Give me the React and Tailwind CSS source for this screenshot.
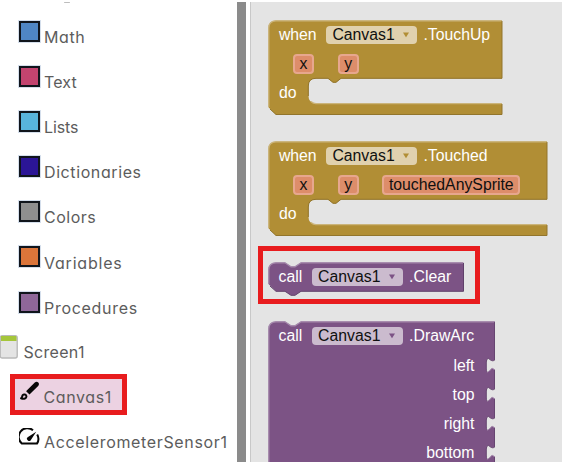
import React from "react";

const categories = [
  { name: "Math", color: "bg-[#4f86c4]", tracking: "tracking-[0.6px]" },
  { name: "Text", color: "bg-[#c3446f]", tracking: "tracking-[0.1px]" },
  { name: "Lists", color: "bg-[#58b4dc]", tracking: "tracking-[-0.1px]" },
  { name: "Dictionaries", color: "bg-[#2b1596]", tracking: "tracking-[0.6px]" },
  { name: "Colors", color: "bg-[#8f8f8f]", tracking: "tracking-[0.5px]" },
  { name: "Variables", color: "bg-[#db753a]", tracking: "tracking-[0.8px]" },
  { name: "Procedures", color: "bg-[#8f6799]", tracking: "tracking-[0.7px]" },
];

const label =
  "font-['Inter','Liberation_Sans',sans-serif] text-[16px] leading-6 text-[#5c5c5c] whitespace-nowrap [font-feature-settings:'cv11']";

function Category({ name, color, tracking }) {
  return (
    <div className="flex h-[45.15px] items-start gap-[4.5px] pl-[18.5px]">
      <span className={`h-[21px] w-[21px] shrink-0 border-2 border-[#10151c] outline-1 outline-[#d5dfec] ${color}`} />
      <span className={`mt-[4.2px] ${label} ${tracking}`}>{name}</span>
    </div>
  );
}

function Sidebar() {
  return (
    <div className="flex h-full w-[237px] shrink-0 flex-col overflow-hidden bg-white">
      <div className="mt-[2px] ml-[64px] h-px w-[6px] shrink-0 rounded-full bg-[#bdbdbd]" />
      <div className="mt-[17.7px] h-[315.5px] shrink-0">
        {categories.map((c) => (
          <Category key={c.name} {...c} />
        ))}
      </div>
      <div className="flex h-[38px] shrink-0 items-start gap-[5.5px]">
        <svg className="-mt-[1px] shrink-0" width="18" height="24" viewBox="0 0 18 24">
          <rect x="0.2" y="0.7" width="17" height="22.3" rx="2" fill="#e4e4e4" stroke="#b9b9b9" strokeWidth="1.4" />
          <path d="M1 1h15l.5 1v4H1z" fill="#a5c63b" />
        </svg>
        <span className={`mt-[4px] tracking-[0.3px] ${label}`}>Screen1</span>
      </div>
      <div className="ml-[9.5px] flex h-[41px] w-[117.5px] shrink-0 items-start gap-[5px] border-[5px] border-[#e81c1e] bg-[#ecd2e2] pl-[5px]">
        <svg className="mt-[2px] shrink-0" width="19" height="21" viewBox="0 0 19 21">
          <path d="M7.4 10.2 15.4 2.2q1.2-1.1 2.2-.1.9 1-.1 2.2L9.5 12.3z" fill="#080808" stroke="#080808" strokeWidth="1.8" />
          <path d="M1 17.2c1.5-.2.9-2.2 1.7-3.1 1.2-1.3 3.5-.6 3.7 1.1.2 2.2-2.3 3.2-5.4 2z" fill="none" stroke="#080808" strokeWidth="2" strokeLinejoin="round" />
        </svg>
        <span className={`mt-[6px] tracking-[0.6px] ${label}`}>Canvas1</span>
      </div>
      <div className="mt-[12px] flex shrink-0 items-start gap-[4.5px] pl-[18.5px]">
        <svg className="mt-[1px] shrink-0" width="21" height="18" viewBox="0 0 21 18">
          <path d="M14 2.2A8.7 8.7 0 0 0 2.8 15.6H18A8.7 8.7 0 0 0 18.2 6.6" fill="none" stroke="#080808" strokeWidth="2" strokeLinejoin="round" />
          <path d="M17.2 3.8 9 9a2.1 2.1 0 1 0 2.9 2.9z" fill="#080808" />
        </svg>
        <span className={`mt-[3px] tracking-[0.65px] ${label}`}>AccelerometerSensor1</span>
      </div>
    </div>
  );
}

function Field({ color, arrow }) {
  return (
    <span className={`flex h-[18px] w-[91px] shrink-0 items-center justify-between rounded-[4px] pr-[8.5px] pl-[6px] text-[#101010] ${color}`}>
      Canvas1
      <svg width="6" height="6" viewBox="0 0 6 6">
        <path d="M0 .5h6L3 5.3z" fill={arrow} />
      </svg>
    </span>
  );
}

function Param({ children }) {
  return (
    <span className="flex h-[20px] items-center rounded-[4px] border-2 border-[#e7a78e] bg-[#dd8d6a] px-[4.5px] text-[#101010]">
      {children}
    </span>
  );
}

const blockText = "font-['Liberation_Sans',Arial,sans-serif] text-[15.8px] leading-[18px] text-white whitespace-nowrap";

function EventBlock({ event, params, width, className }) {
  const r = width - 0.5;
  return (
    <div className={`relative flex h-[95px] shrink-0 flex-col ${blockText} ${className}`}>
      <svg className="absolute inset-0" width={width} height="95" viewBox={`0 0 ${width} 95`}>
        <path
          d={`M8 .5H${r}V58.5H73L68 62.5H65L60 58.5H48Q40.5 58.5 40.5 66V76Q40.5 83.3 48 83.3H${r}V94.8H8L.5 87.3V8Q.5.5 8 .5Z`}
          fill="#b18e35"
        />
        <path d={`M.8 87V8Q.8.8 8 .8H${r}M43 81.5Q45 83.5 48 83.6H${r}`} fill="none" stroke="#cbb47a" strokeWidth="1.3" />
        <path
          d={`M${r} 1V58.3H73L68 62.3H65L60 58.3H48Q40.3 58.3 40.3 66V76M${r} 84V94.5H8L2 89`}
          fill="none"
          stroke="#92752c"
          strokeWidth="1"
        />
      </svg>
      <div className="relative flex h-[30px] items-center pl-[10.9px]">
        <span className="w-[47.5px]">when</span>
        <Field color="bg-[#e0d1ae]" arrow="#b18e35" />
        <span className="ml-[6px]">.{event}</span>
      </div>
      <div className="relative flex h-[28px] items-center gap-[23.8px] pl-[25px]">
        {params.map((p) => (
          <Param key={p}>{p}</Param>
        ))}
      </div>
      <div className="relative mt-[5.5px] pl-[10.9px]">do</div>
    </div>
  );
}

function CallHeader({ method }) {
  return (
    <div className="relative flex h-[30px] items-center pl-[10.6px]">
      <span className="w-[33.5px]">call</span>
      <Field color="bg-[#cbbbce]" arrow="#7c5385" />
      <span className="ml-[6px]">.{method}</span>
    </div>
  );
}

function ClearBlock() {
  return (
    <div className={`relative -mt-[0.5px] h-[34px] w-[196px] ${blockText}`}>
      <svg className="absolute inset-0" width="196" height="34" viewBox="0 0 196 34">
        <path d="M8 .5H17L23 4.5H27L33 .5H195.5V29.3H33L27 33.3H23L17 29.3H8L.5 22V8Q.5.5 8 .5Z" fill="#7c5385" />
        <path d="M.8 22V8Q.8.8 8 .8H17L23 4.8H27L33 .8H195" fill="none" stroke="#a589ac" strokeWidth="1.3" />
        <path d="M195.5 1V29.3H33L27 33.3H23L17 29.3H8L2 24" fill="none" stroke="#60406a" strokeWidth="1" />
      </svg>
      <CallHeader method="Clear" />
    </div>
  );
}

function DrawArcBlock() {
  return (
    <div className={`relative mt-[17px] h-[170px] w-[227px] shrink-0 ${blockText}`}>
      <svg className="absolute inset-0" width="227" height="170" viewBox="0 0 227 170">
        <path d="M8 .5H17L23 4.5H27L33 .5H227V170H.5V8Q.5.5 8 .5Z" fill="#7c5385" />
        <path d="M.8 170V8Q.8.8 8 .8H17L23 4.8H27L33 .8H226.5" fill="none" stroke="#a589ac" strokeWidth="1.3" />
        <path d="M226.6 1V170" fill="none" stroke="#60406a" strokeWidth=".8" />
        {[37, 66, 95, 124].map((y) => (
          <g key={y} transform={`translate(218 ${y})`}>
            <path d="M9.3 1.4C7 3.6 5.5 3 2.2.3Q.3 1.2.3 4V11Q.3 13.6 1.5 14.2C4.5 12.8 4.8 10.6 6.2 10.3L9.3 11.8Z" fill="#e4e4e4" />
            <path d="M9 1.6C7 3.6 5.5 3 2.2.3Q.3 1.2.3 4V11Q.3 13 1 13.8" fill="none" stroke="#60406a" strokeWidth=".9" />
            <path d="M1.5 14.2C4.5 12.8 4.8 10.6 6.2 10.3L8.6 11.6" fill="none" stroke="#a589ac" strokeWidth="1" />
          </g>
        ))}
      </svg>
      <CallHeader method="DrawArc" />
      <div className="relative -mt-[0.5px] flex flex-col pr-[20.5px] text-right leading-[29px]">
        <span>left</span>
        <span>top</span>
        <span>right</span>
        <span>bottom</span>
      </div>
    </div>
  );
}

export default function App() {
  return (
    <div className="flex h-[462px] w-[562px] overflow-hidden bg-white">
      <Sidebar />
      <div className="mt-[2px] w-[9px] shrink-0 bg-[#8b8b8b]" />
      <div className="mt-[2px] ml-[4px] flex min-w-0 flex-1 flex-col items-start overflow-hidden border-l border-[#c8c8c8] bg-[#e4e4e4] pt-[18px] pl-[17px]">
        <EventBlock event="TouchUp" params={["x", "y"]} width={234.5} className="w-[234.5px]" />
        <EventBlock event="Touched" params={["x", "y", "touchedAnySprite"]} width={279.5} className="mt-[26px] w-[279.5px]" />
        <div className="mt-[10px] -ml-[10px] h-[58px] w-[222px] shrink-0 border-[5px] border-[#e81c1e] pt-[11px] pl-[5px]">
          <ClearBlock />
        </div>
        <DrawArcBlock />
      </div>
    </div>
  );
}
